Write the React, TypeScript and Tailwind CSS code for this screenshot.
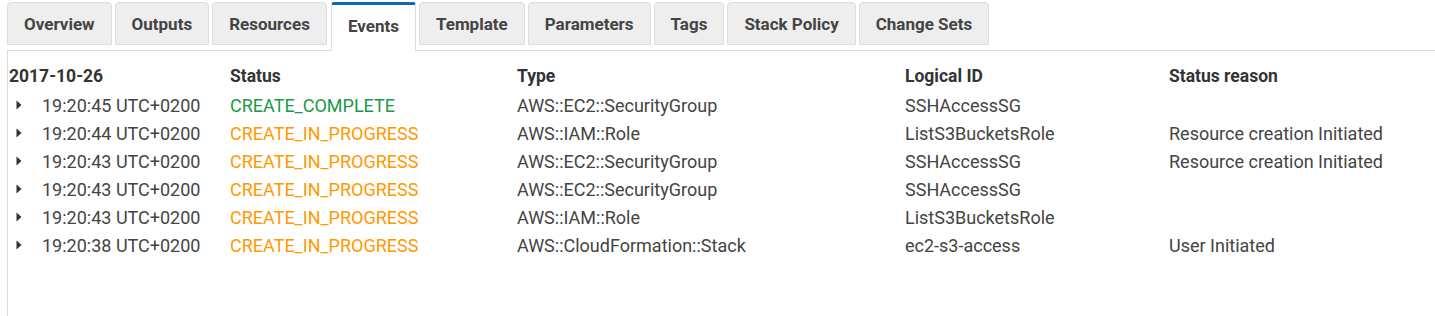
import React from "react";

const tabs = ["Overview", "Outputs", "Resources", "Events", "Template", "Parameters", "Tags", "Stack Policy", "Change Sets"];

type Row = { time: string; status: string; type: string; id: string; reason: string };

const rows: Row[] = [
  { time: "19:20:45 UTC+0200", status: "CREATE_COMPLETE", type: "AWS::EC2::SecurityGroup", id: "SSHAccessSG", reason: "" },
  { time: "19:20:44 UTC+0200", status: "CREATE_IN_PROGRESS", type: "AWS::IAM::Role", id: "ListS3BucketsRole", reason: "Resource creation Initiated" },
  { time: "19:20:43 UTC+0200", status: "CREATE_IN_PROGRESS", type: "AWS::EC2::SecurityGroup", id: "SSHAccessSG", reason: "Resource creation Initiated" },
  { time: "19:20:43 UTC+0200", status: "CREATE_IN_PROGRESS", type: "AWS::EC2::SecurityGroup", id: "SSHAccessSG", reason: "" },
  { time: "19:20:43 UTC+0200", status: "CREATE_IN_PROGRESS", type: "AWS::IAM::Role", id: "ListS3BucketsRole", reason: "" },
  { time: "19:20:38 UTC+0200", status: "CREATE_IN_PROGRESS", type: "AWS::CloudFormation::Stack", id: "ec2-s3-access", reason: "User Initiated" },
];

function Caret() {
  return (
    <svg width="6" height="10" viewBox="0 0 6 10" className="shrink-0">
      <path d="M0.5 0.5 L5.5 5 L0.5 9.5 Z" fill="#333" />
    </svg>
  );
}

export default function App() {
  return (
    <div className="w-[1435px] h-[316px] bg-white pt-[2px] pl-[7px] text-[#444] overflow-hidden" style={{ fontFamily: "Roboto, 'Liberation Sans', sans-serif" }}>
      <div className="flex items-start gap-[3px] border-b border-[#ddd]">
        {tabs.map((t) =>
          t === "Events" ? (
            <div
              key={t}
              className="-mb-px ml-[1px] h-[49px] px-[16px] pb-[2px] flex items-center justify-center bg-white border-x border-[#ddd] border-t-[3px] border-t-[#1166bb] rounded-t-[3px] text-[17px] font-bold text-[#444]"
            >
              {t}
            </div>
          ) : (
            <div
              key={t}
              className="h-[43px] px-[16px] pt-[3px] flex items-center justify-center bg-[#eeeeee] border border-[#dddddd] rounded-t-[4px] text-[17px] font-bold text-[#444]"
            >
              {t}
            </div>
          )
        )}
      </div>
      <div className="h-[300px] border-l border-[#ddd] pt-[11px] pl-[1px] text-[18px]">
        <div className="grid grid-cols-[221px_287px_388px_264px_1fr] h-[29px] items-center font-bold text-[17.5px] text-[#333]">
          <div>2017-10-26</div>
          <div>Status</div>
          <div>Type</div>
          <div>Logical ID</div>
          <div>Status reason</div>
        </div>
        {rows.map((r, i) => (
          <div key={i} className="grid grid-cols-[221px_287px_388px_264px_1fr] h-[28px] items-center text-[#444]">
            <div className="flex items-center">
              <span className="ml-[7px] mr-[20px] flex items-center">
                <Caret />
              </span>
              <span>{r.time}</span>
            </div>
            <div className={r.status === "CREATE_COMPLETE" ? "text-[#1a9a48]" : "text-[#ff9900]"}>{r.status}</div>
            <div>{r.type}</div>
            <div>{r.id}</div>
            <div>{r.reason}</div>
          </div>
        ))}
      </div>
    </div>
  );
}
